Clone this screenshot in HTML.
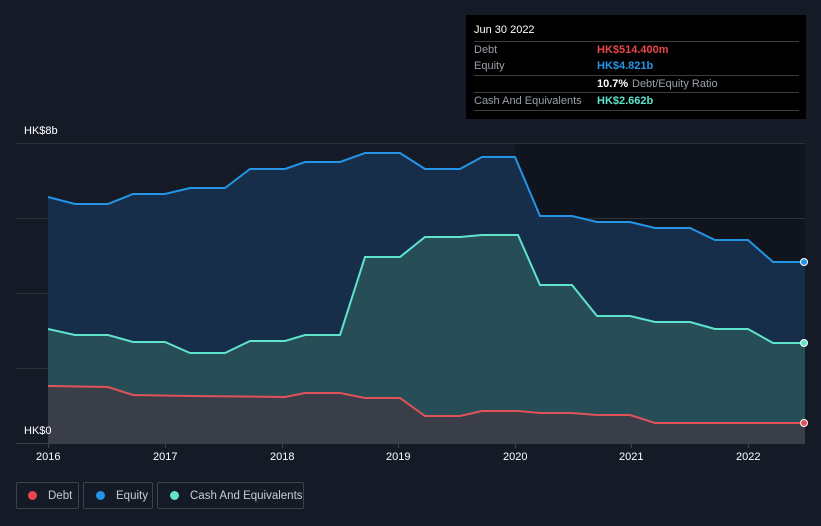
<!DOCTYPE html><html><head><style>
body{margin:0;width:821px;height:526px;background:#151b26;font-family:"Liberation Sans",sans-serif;overflow:hidden;position:relative}
.t{position:absolute;color:#fff;font-size:11px}
.tip{position:absolute;left:466px;top:15px;width:340px;height:104px;background:#000;}
.row{position:absolute;left:8px;width:325px;font-size:11px;color:#9aa0a8;border-top:1px solid #3a3d42;height:17px;line-height:17px}
.leg{position:absolute;top:482px;height:27px;border:1px solid #3d434d;border-radius:2px;color:#c8ccd2;font-size:11.5px;line-height:26px;box-sizing:border-box;white-space:nowrap}
.dot{display:inline-block;width:9px;height:9px;border-radius:50%;margin:0 11px 0 12px;vertical-align:-1px}
</style></head><body>
<svg width="821" height="526" style="position:absolute;left:0;top:0">
<rect x="16" y="143" width="789" height="300" fill="#151b26"/>
<rect x="515" y="143" width="290" height="300" fill="#10141c"/>
<g stroke="#2c323c" stroke-width="1">
<line x1="16" y1="143.5" x2="805" y2="143.5"/><line x1="16" y1="218.5" x2="805" y2="218.5"/><line x1="16" y1="293.5" x2="805" y2="293.5"/><line x1="16" y1="368.5" x2="805" y2="368.5"/></g>
<polygon fill="#173150" fill-opacity="0.9" points="48,197 75,204 108,204 133,194 165,194 190,188 225,188 250,169 285,169 305,162 340,162 365,153 400,153 425,169 460,169 482,157 515,157 540,216 572,216 597,222 630,222 655,228 690,228 715,240 748,240 773,262 805,262 805,443 48,443"/>
<polygon fill="#2a5458" fill-opacity="0.85" points="48,329 75,335 108,335 133,342 165,342 190,353 225,353 250,341 285,341 305,335 340,335 365,257 400,257 425,237 460,237 482,235 518,235 540,285 572,285 597,316 630,316 655,322 690,322 715,329 748,329 773,343 805,343 805,443 48,443"/>
<polygon fill="#3a3e48" points="48,386 108,387 133,395 190,396 285,397 305,393 340,393 365,398 400,398 425,416 460,416 482,411 518,411 540,413 572,413 597,415 630,415 655,423 805,423 805,443 48,443"/>
<polyline fill="none" stroke="#2394e6" stroke-width="2" points="48,197 75,204 108,204 133,194 165,194 190,188 225,188 250,169 285,169 305,162 340,162 365,153 400,153 425,169 460,169 482,157 515,157 540,216 572,216 597,222 630,222 655,228 690,228 715,240 748,240 773,262 805,262"/>
<polyline fill="none" stroke="#5fe3cc" stroke-width="2" points="48,329 75,335 108,335 133,342 165,342 190,353 225,353 250,341 285,341 305,335 340,335 365,257 400,257 425,237 460,237 482,235 518,235 540,285 572,285 597,316 630,316 655,322 690,322 715,329 748,329 773,343 805,343"/>
<polyline fill="none" stroke="#e0525a" stroke-width="2" points="48,386 108,387 133,395 190,396 285,397 305,393 340,393 365,398 400,398 425,416 460,416 482,411 518,411 540,413 572,413 597,415 630,415 655,423 805,423"/>
<line x1="16" y1="443.5" x2="805" y2="443.5" stroke="#3a404a"/>
<g stroke="#3a404a"><line x1="48.5" y1="443" x2="48.5" y2="448"/><line x1="165.5" y1="443" x2="165.5" y2="448"/><line x1="282.5" y1="443" x2="282.5" y2="448"/><line x1="398.5" y1="443" x2="398.5" y2="448"/><line x1="515.5" y1="443" x2="515.5" y2="448"/><line x1="631.5" y1="443" x2="631.5" y2="448"/><line x1="748.5" y1="443" x2="748.5" y2="448"/></g>
<circle cx="804" cy="262" r="3.5" fill="#2394e6" stroke="#fff" stroke-width="1"/>
<circle cx="804" cy="343" r="3.5" fill="#5fe3cc" stroke="#fff" stroke-width="1"/>
<circle cx="804" cy="423" r="3.5" fill="#e0525a" stroke="#fff" stroke-width="1"/>
</svg>
<div class="t" style="left:24px;top:125px">HK$8b</div>
<div class="t" style="left:24px;top:425px">HK$0</div>
<div class="t" style="left:36px;top:451px">2016</div><div class="t" style="left:153px;top:451px">2017</div><div class="t" style="left:270px;top:451px">2018</div><div class="t" style="left:386px;top:451px">2019</div><div class="t" style="left:503px;top:451px">2020</div><div class="t" style="left:619px;top:451px">2021</div><div class="t" style="left:736px;top:451px">2022</div>
<div class="tip">
<div style="position:absolute;left:8px;top:9px;color:#fff;font-size:11px">Jun 30 2022</div>
<div class="row" style="top:26px">Debt<span style="position:absolute;left:123px;color:#e8474c;font-weight:bold">HK$514.400m</span></div>
<div class="row" style="top:43px;border:none">Equity<span style="position:absolute;left:123px;color:#2394e6;font-weight:bold">HK$4.821b</span></div>
<div class="row" style="top:60px;border-top:1px solid #3a3d42"><span style="position:absolute;left:123px;color:#fff;font-weight:bold">10.7%</span><span style="position:absolute;left:158px">Debt/Equity Ratio</span></div>
<div class="row" style="top:77px;border-bottom:1px solid #3a3d42">Cash And Equivalents<span style="position:absolute;left:123px;color:#5fe3cc;font-weight:bold">HK$2.662b</span></div>
</div>
<div class="leg" style="left:16px;width:63px"><span class="dot" style="background:#e8474c;margin-left:11px"></span>Debt</div>
<div class="leg" style="left:83px;width:70px"><span class="dot" style="background:#2394e6"></span>Equity</div>
<div class="leg" style="left:157px;width:147px"><span class="dot" style="background:#5fe3cc"></span>Cash And Equivalents</div>
</body></html>
